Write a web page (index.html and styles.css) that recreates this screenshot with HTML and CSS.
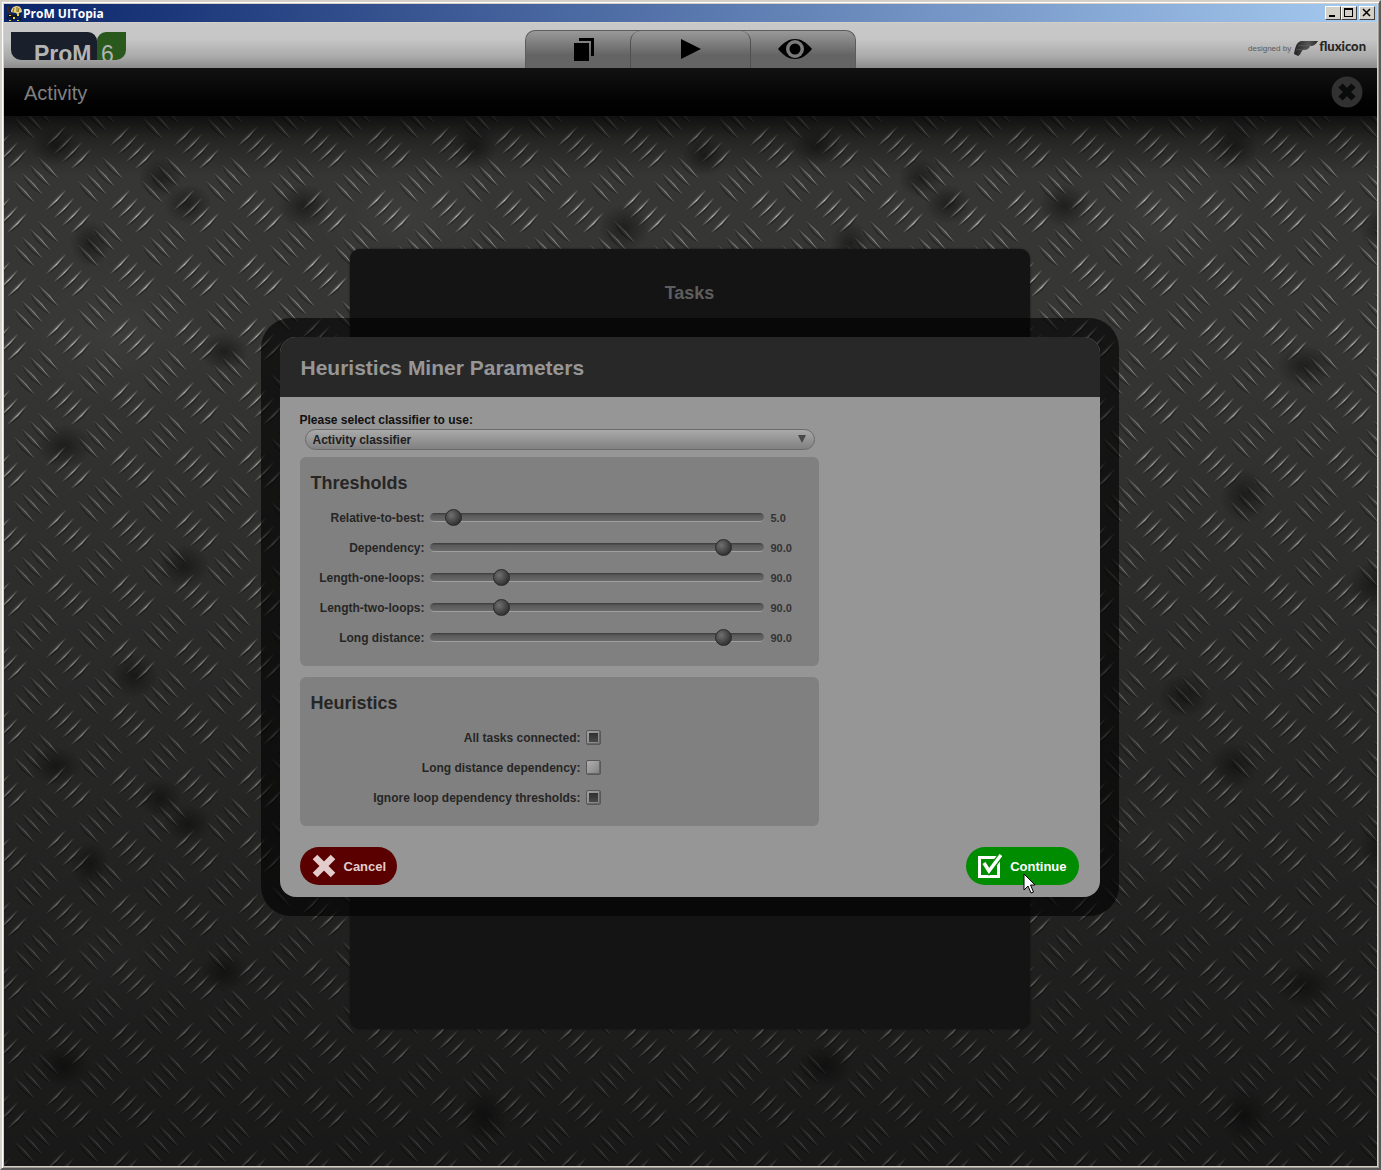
FILE: index.html
```html
<!DOCTYPE html>
<html lang="en">
<head>
<meta charset="utf-8">
<title>ProM UITopia</title>
<link rel="stylesheet" href="styles.css">
</head>
<body>
<div class="window">
  <div class="titlebar">
    <svg class="titlebar-icon" width="17" height="17" viewBox="0 0 17 17" aria-hidden="true">
      <path d="M1 2l2-1v5l2 2-1 2-3-4z" fill="#3a2a20"/>
      <path d="M5 7c0-4 3-6 6-6s5 3 5 6l-3 1-1 2-2-2z" fill="#e6cf7a"/>
      <path d="M8 3l-1 4M11 2v5M13 3l-1 4" stroke="#7a6428" fill="none"/>
      <path d="M2 9l9 1v2l-8 1z" fill="#14141c"/>
      <circle cx="4" cy="13" r="2.5" fill="none" stroke="#111" stroke-width="1.500" stroke-dasharray="2 1"/>
      <circle cx="12" cy="13" r="2.5" fill="none" stroke="#111" stroke-width="1.500" stroke-dasharray="2 1"/>
      <path d="M3 10h2v1H3zM11 9h2v2h-2zM3 15h2v1H3zM11 15h2v1h-2zM7 12h2v2H7z" fill="#e8d820"/>
    </svg>
    <span class="titlebar-text">ProM UITopia</span>
    <div class="window-controls">
      <button class="win-btn" aria-label="Minimize"><svg width="14" height="12" viewBox="0 0 14 12"><path d="M3 8h6v2H3z"/></svg></button>
      <button class="win-btn" aria-label="Maximize"><svg width="14" height="12" viewBox="0 0 14 12"><path d="M2 1h9v9H2zM3 3v6h7V3z" fill-rule="evenodd"/></svg></button>
      <button class="win-btn win-close" aria-label="Close window"><svg width="14" height="12" viewBox="0 0 14 12"><path d="M3 2l7 7M10 2L3 9" stroke="#000" stroke-width="1.500"/></svg></button>
    </div>
  </div>

  <header class="topbar">
    <div class="logo"><span class="logo-name">ProM</span><span class="logo-version">6</span></div>
    <nav class="tabs" aria-label="Views">
      <button class="tab tab-first" aria-label="Workspace">
        <svg width="22" height="26" viewBox="0 0 22 26"><path d="M6 2h15v18h-3V5H6z"/><path d="M1 7h15v18H1z"/></svg>
      </button>
      <button class="tab tab-active" aria-label="Actions">
        <svg width="22" height="22" viewBox="0 0 22 22"><path d="M1 1l20 10L1 21z"/></svg>
      </button>
      <button class="tab tab-last" aria-label="Views">
        <svg width="34" height="22" viewBox="0 0 34 22"><path d="M0 11C6 4 11 1 17 1s11 3 17 10c-6 7-11 10-17 10S6 18 0 11z"/><circle cx="17" cy="11" r="9" fill="#7a7a7a"/><circle cx="17" cy="11" r="5.500"/></svg>
      </button>
    </nav>
    <div class="brand">
      <span class="brand-by">designed by</span>
      <svg class="brand-mark" width="24" height="16" viewBox="0 0 24 16" aria-hidden="true">
        <defs><linearGradient id="mark" x1="0" y1="0" x2="1" y2="0"><stop offset="0" stop-color="#222"/><stop offset=".6" stop-color="#555"/><stop offset="1" stop-color="#2a2a2a"/></linearGradient></defs>
        <path d="M7 1h17c-2 3-3 4-6 5h-2c-1 3-3 4-7 4-2 1-2 5-5 6L0 14C1 9 2 2 7 1z" fill="url(#mark)"/>
        <path d="M4 6c4-1 8 0 13-1M2 10c3-1 6 0 9-1" stroke="#666" stroke-width=".6" fill="none"/>
      </svg>
      <span class="brand-name">fluxicon</span>
    </div>
  </header>

  <main class="workspace">
    <div class="activity-bar">
      <h1 class="activity-title">Activity</h1>
      <button class="activity-close" aria-label="Close activity">
        <svg width="32" height="32" viewBox="0 0 32 32"><circle cx="16" cy="16" r="15.500" fill="#313131"/><path d="M9.500 9.500l13 13M22.500 9.500l-13 13" stroke="#0a0c0c" stroke-width="6"/></svg>
      </button>
    </div>

    <div class="stage">
      <svg class="plate" width="100%" height="100%" aria-hidden="true">
        <defs>
          <linearGradient id="edge" gradientUnits="userSpaceOnUse" x1="0" y1="20" x2="20" y2="0"><stop offset="0" stop-color="#3a3a38"/><stop offset=".5" stop-color="#b2b2ac"/><stop offset="1" stop-color="#3c3c3a"/></linearGradient>
          <linearGradient id="edge-back" gradientUnits="userSpaceOnUse" x1="0" y1="0" x2="20" y2="21"><stop offset="0" stop-color="#3c3c3a"/><stop offset=".55" stop-color="#a0a09a"/><stop offset="1" stop-color="#50504e"/></linearGradient>
          <radialGradient id="stain"><stop offset="0" stop-color="#000" stop-opacity=".42"/><stop offset="1" stop-color="#000" stop-opacity="0"/></radialGradient>
          <radialGradient id="haze"><stop offset="0" stop-color="#fff" stop-opacity=".03"/><stop offset="1" stop-color="#fff" stop-opacity="0"/></radialGradient>
          <g id="rib">
            <path d="M0 21Q14 15 20 0Q10 9 0 21z" fill="#1a1a1a" opacity=".5"/>
            <path d="M0 20Q7 8 20 0Q12 12 0 20z" fill="#484847"/>
            <path d="M0 20Q11 11 20 0" fill="none" stroke="url(#edge)" stroke-width="1.200"/>
          </g>
          <g id="rib-back">
            <path d="M0 0Q4 14 20 22Q12 10 0 0z" fill="#1a1a1a" opacity=".5"/>
            <path d="M0 0Q7 12 20 21Q12 9 0 0z" fill="#444443"/>
            <path d="M0 0Q11 9 20 21" fill="none" stroke="url(#edge-back)"/>
          </g>
          <g id="cluster">
            <use href="#rib" x="42" y="10"/><use href="#rib" x="50" y="18"/><use href="#rib" x="58" y="26"/><use href="#rib" x="67" y="33"/>
            <use href="#rib-back" x="34" y="41"/><use href="#rib-back" x="26" y="49"/><use href="#rib-back" x="18" y="57"/><use href="#rib-back" x="10" y="65"/>
          </g>
          <pattern id="ribs" width="64" height="64" patternUnits="userSpaceOnUse">
            <use href="#cluster"/><use href="#cluster" x="-64"/><use href="#cluster" y="-64"/><use href="#cluster" x="-64" y="-64"/>
          </pattern>
          <pattern id="stains" width="760" height="620" patternUnits="userSpaceOnUse">
            <ellipse cx="52" cy="30" rx="26" ry="20" fill="url(#stain)"/><ellipse cx="156" cy="62" rx="22" ry="20" fill="url(#stain)"/>
            <ellipse cx="184" cy="88" rx="24" ry="20" fill="url(#stain)"/><ellipse cx="86" cy="128" rx="20" ry="24" fill="url(#stain)"/>
            <ellipse cx="300" cy="90" rx="26" ry="22" fill="url(#stain)"/><ellipse cx="220" cy="236" rx="24" ry="20" fill="url(#stain)"/>
            <ellipse cx="60" cy="330" rx="28" ry="22" fill="url(#stain)"/><ellipse cx="470" cy="30" rx="24" ry="24" fill="url(#stain)"/>
            <ellipse cx="180" cy="450" rx="26" ry="22" fill="url(#stain)"/><ellipse cx="620" cy="112" rx="26" ry="24" fill="url(#stain)"/>
            <ellipse cx="700" cy="40" rx="22" ry="20" fill="url(#stain)"/><ellipse cx="540" cy="250" rx="28" ry="22" fill="url(#stain)"/>
            <ellipse cx="420" cy="580" rx="26" ry="22" fill="url(#stain)"/><ellipse cx="610" cy="470" rx="28" ry="24" fill="url(#stain)"/>
            <ellipse cx="130" cy="560" rx="24" ry="22" fill="url(#stain)"/><ellipse cx="480" cy="380" rx="24" ry="28" fill="url(#stain)"/>
            <ellipse cx="400" cy="100" rx="90" ry="60" fill="url(#haze)"/><ellipse cx="110" cy="220" rx="90" ry="70" fill="url(#haze)"/>
          </pattern>
        </defs>
        <rect width="100%" height="100%" fill="#363635"/>
        <rect width="100%" height="100%" fill="url(#ribs)"/>
        <rect width="100%" height="100%" fill="url(#stains)"/>
      </svg>
      <section class="tasks">
        <h2 class="tasks-title">Tasks</h2>
      </section>
    </div>

    <div class="overlay">
      <form class="dialog" role="dialog" aria-labelledby="dialog-title">
        <div class="dialog-inner">
          <div class="dialog-head"><h2 class="dialog-title" id="dialog-title">Heuristics Miner Parameters</h2></div>
          <div class="dialog-body">
            <div class="fields">
              <label class="select-label" for="classifier">Please select classifier to use:</label>
              <div class="select-wrap">
                <select class="select" id="classifier"><option>Activity classifier</option></select>
                <svg class="select-arrow" width="8" height="8" viewBox="0 0 8 8" aria-hidden="true"><path d="M0 0h8L4 8z" fill="#484848"/></svg>
              </div>
              <fieldset class="panel">
                <h3 class="panel-title">Thresholds</h3>
                <div class="slider-row"><label for="s1">Relative-to-best:</label><input class="slider" id="s1" type="range" value="5"><output for="s1">5.0</output></div>
                <div class="slider-row"><label for="s2">Dependency:</label><input class="slider" id="s2" type="range" value="90"><output for="s2">90.0</output></div>
                <div class="slider-row"><label for="s3">Length-one-loops:</label><input class="slider" id="s3" type="range" value="20"><output for="s3">90.0</output></div>
                <div class="slider-row"><label for="s4">Length-two-loops:</label><input class="slider" id="s4" type="range" value="20"><output for="s4">90.0</output></div>
                <div class="slider-row"><label for="s5">Long distance:</label><input class="slider" id="s5" type="range" value="90"><output for="s5">90.0</output></div>
              </fieldset>
              <fieldset class="panel">
                <h3 class="panel-title">Heuristics</h3>
                <div class="check-row"><label for="c1">All tasks connected:</label><input class="check" id="c1" type="checkbox" checked></div>
                <div class="check-row"><label for="c2">Long distance dependency:</label><input class="check" id="c2" type="checkbox"></div>
                <div class="check-row"><label for="c3">Ignore loop dependency thresholds:</label><input class="check" id="c3" type="checkbox" checked></div>
              </fieldset>
            </div>
            <div class="actions">
              <button class="btn btn-cancel" type="button">
                <svg width="24" height="24" viewBox="0 0 24 24" aria-hidden="true"><path d="M3 3l18 18M21 3L3 21" stroke="#e2cccc" stroke-width="6.500"/></svg>
                Cancel
              </button>
              <button class="btn btn-continue" type="button">
                <svg width="24" height="24" viewBox="0 0 24 24" aria-hidden="true"><path d="M1.500 3.500h19v19h-19z" fill="none" stroke="#fff" stroke-width="3"/><path d="M6 10l5 7L23 1" fill="none" stroke="#008c00" stroke-width="6"/><path d="M6 9l5 8L23 1" fill="none" stroke="#fff" stroke-width="3.500"/></svg>
                Continue
                <svg class="pointer" width="13" height="22" viewBox="0 0 13 22" aria-hidden="true"><path d="M1 1v16l4-4 3 7 2.500-1-3-7H12z" fill="#fff" stroke="#000"/></svg>
              </button>
            </div>
          </div>
        </div>
      </form>
    </div>
  </main>
</div>
</body>
</html>
```

FILE: styles.css
```css
* { box-sizing: border-box; }

body {
  margin: 0;
  font-family: "Liberation Sans", Arial, sans-serif;
  font-size: 12px;
  color: #262626;
}

h1, h2, h3 { margin: 0; }

button {
  margin: 0;
  padding: 0;
  border: 0;
  background: none;
  font: inherit;
  color: inherit;
}

svg { display: block; }

/* Window frame */
.window {
  display: flex;
  flex-direction: column;
  min-height: 100vh;
  padding: 2px;
  background: #d4d0c8;
  border: 2px solid #d4d0c8;
  border-right-color: #5a5a5a;
  border-bottom-color: #5a5a5a;
  box-shadow: inset 1px 1px 0 #fff, inset -1px -1px 0 #a09c96;
}

.titlebar {
  display: flex;
  align-items: center;
  height: 18px;
  padding: 0 2px;
  background: linear-gradient(90deg, #0a246a, #a6caf0);
}

.titlebar-text {
  flex: 1;
  padding-top: 1px;
  font-family: "Open Sans", sans-serif;
  font-size: 12px;
  font-weight: bold;
  line-height: 17px;
  color: #fff;
}

.window-controls { display: flex; }

.win-btn {
  width: 16px;
  height: 14px;
  background: #d4d0c8;
  border: 1px solid #fff;
  border-right-color: #404040;
  border-bottom-color: #404040;
}

.win-close { margin-left: 2px; }

/* Top bar */
.topbar {
  display: grid;
  grid-template-columns: 1fr auto 1fr;
  height: 46px;
  border-top: 1px solid #d4d0c8;
  background: linear-gradient(#c8c8c8 0, #c6c6c6 35%, #aaa 75%, #8c8c8c);
}

.logo {
  display: flex;
  height: 28px;
  margin: 9px 0 0 7px;
  overflow: hidden;
  font-size: 23px;
  line-height: 26px;
  color: #b4b4b4;
}

.logo-name {
  width: 86px;
  height: 28px;
  padding: 9px 0 0 23px;
  border-radius: 0 9px 0 10px;
  overflow: hidden;
  background: #19202b;
  font-weight: bold;
}

.logo-version {
  width: 29px;
  height: 28px;
  padding: 9px 0 0 4px;
  border-radius: 9px 0 10px 0;
  overflow: hidden;
  background: #29591c;
}

.tabs {
  display: flex;
  margin-top: 7px;
  border: 1px solid #5c5c5c;
  border-bottom: 0;
  border-radius: 10px 10px 0 0;
  overflow: hidden;
  background: linear-gradient(#999, #646464 65%);
}

.tab {
  display: flex;
  justify-content: center;
  width: 104px;
  padding-top: 5px;
}

.tab-first { padding-left: 12px; }
.tab-active {
  width: 121px;
  padding-top: 7px;
  border: 1px solid #505050;
  border-width: 0 1px;
  border-radius: 10px 10px 0 0;
}
.tab-last { padding-top: 7px; padding-right: 16px; }

.brand {
  display: flex;
  justify-content: flex-end;
  align-items: center;
  height: 32px;
  margin-top: 9px;
  padding-right: 11px;
}

.brand-by { font-size: 8px; color: #5c5c5c; }
.brand-mark { margin: 0 1px 0 3px; }
.brand-name {
  margin-top: -4px;
  font-family: Lato, sans-serif;
  font-size: 13px;
  font-weight: 900;
  color: #262626;
}

/* Workspace */
.workspace {
  position: relative;
  flex: 1;
  display: flex;
  flex-direction: column;
  background: #000;
}

.activity-bar {
  display: flex;
  align-items: center;
  justify-content: space-between;
  height: 48px;
  padding: 0 14px 0 20px;
  background: linear-gradient(#121212, #020202 70%, #000);
}

.activity-title {
  padding-top: 2px;
  font-size: 20px;
  font-weight: normal;
  color: #808080;
}

.stage {
  position: relative;
  flex: 1;
  display: flex;
  align-items: center;
  justify-content: center;
  padding: 20px 22px 24px 20px;
}

.plate { position: absolute; inset: 0; }

.stage::before {
  content: "";
  position: absolute;
  inset: 0;
  z-index: 1;
  background:
    linear-gradient(rgba(0, 0, 0, .7), rgba(0, 0, 0, .3) 24px, rgba(0, 0, 0, 0) 60px),
    linear-gradient(rgba(0, 0, 0, 0) 20%, rgba(0, 0, 0, .55));
}

.tasks {
  position: relative;
  z-index: 2;
  width: 680px;
  max-width: 100%;
  min-height: 780px;
  padding: 34px 30px 30px;
  border-radius: 10px;
  background: #141414;
  box-shadow: 0 0 2px #111;
}

.tasks-title {
  font-size: 18px;
  line-height: 20px;
  text-align: center;
  color: #5e5e5e;
}

/* Dialog */
.overlay {
  position: absolute;
  inset: 0;
  z-index: 3;
  display: flex;
  align-items: center;
  justify-content: center;
  padding-right: 2px;
}

.dialog {
  width: 858px;
  max-width: 100%;
  padding: 19px;
  border-radius: 30px;
  background: rgba(0, 0, 0, .6);
}

.dialog-inner {
  border-radius: 16px;
  overflow: hidden;
  background: #969696;
}

.dialog-head { padding: 19px 21px 17px; background: #282828; }
.dialog-title { font-size: 21px; line-height: 24px; color: #969696; }
.dialog-body { padding: 16px 20px 12px; }

.fields {
  display: flex;
  flex-direction: column;
  max-width: 519px;
  font-weight: bold;
}

.select-label { line-height: 14px; color: #101010; }

.select-wrap { position: relative; margin: 2px 4px 7px 5px; }

.select {
  display: block;
  width: 100%;
  height: 21px;
  padding: 0 24px 0 7px;
  appearance: none;
  border: 1px solid #6a6a6a;
  border-radius: 11px;
  background: linear-gradient(#aaa, #808080);
  font: bold 12px "Liberation Sans", Arial, sans-serif;
  color: #202020;
}

.select-arrow { position: absolute; top: 6px; right: 9px; }

.panel {
  min-width: 0;
  margin: 0;
  padding: 16px 10px 13px 11px;
  border: 0;
  border-radius: 6px;
  background: #808080;
}

.panel + .panel { margin-top: 11px; }

.panel-title { margin-bottom: 10px; font-size: 18px; line-height: 20px; }

.slider-row, .check-row {
  display: grid;
  align-items: center;
  column-gap: 5px;
  height: 30px;
}

.slider-row { grid-template-columns: 114px 1fr 40px; }
.check-row { grid-template-columns: 270px auto 1fr; }
.slider-row label, .check-row label { text-align: right; white-space: nowrap; }
.slider-row output { padding-left: 2px; font-size: 11px; color: #333; }

.slider {
  width: 100%;
  height: 17px;
  margin: 0 0 2px;
  appearance: none;
  background: none;
}

.slider::-webkit-slider-runnable-track {
  height: 9px;
  border-radius: 5px;
  border-bottom: 1px solid #a0a0a0;
  background: linear-gradient(#3c3c3c, #5a5a5a 30%, #6a6a6a);
}

.slider::-webkit-slider-thumb {
  appearance: none;
  width: 17px;
  height: 17px;
  margin-top: -4px;
  border: 1px solid #2a2a2a;
  border-radius: 50%;
  background: radial-gradient(circle at 35% 35%, #707070, #3e3e3e 60%, #1c1c1c);
}

.check {
  width: 15px;
  height: 15px;
  margin: 0 0 2px;
  appearance: none;
  border: 1px solid #585858;
  border-radius: 2px;
  background: linear-gradient(135deg, #b0b0b0, #808080);
  box-shadow: inset -1px -1px 0 #666;
}

.check:checked {
  background:
    linear-gradient(#303030, #484848) center / 9px 9px no-repeat,
    linear-gradient(135deg, #a0a0a0, #808080);
}

.actions {
  display: flex;
  justify-content: space-between;
  margin-top: 21px;
  padding-right: 1px;
}

.btn {
  display: flex;
  align-items: center;
  gap: 8px;
  height: 38px;
  padding: 0 12px;
  border-radius: 19px;
  font-size: 13px;
  font-weight: bold;
}

.btn-cancel { padding-right: 11px; background: #5a0000; color: #e2cccc; }
.btn-continue { position: relative; background: #008c00; color: #fff; }
.pointer { position: absolute; left: 57px; top: 26px; }
```
